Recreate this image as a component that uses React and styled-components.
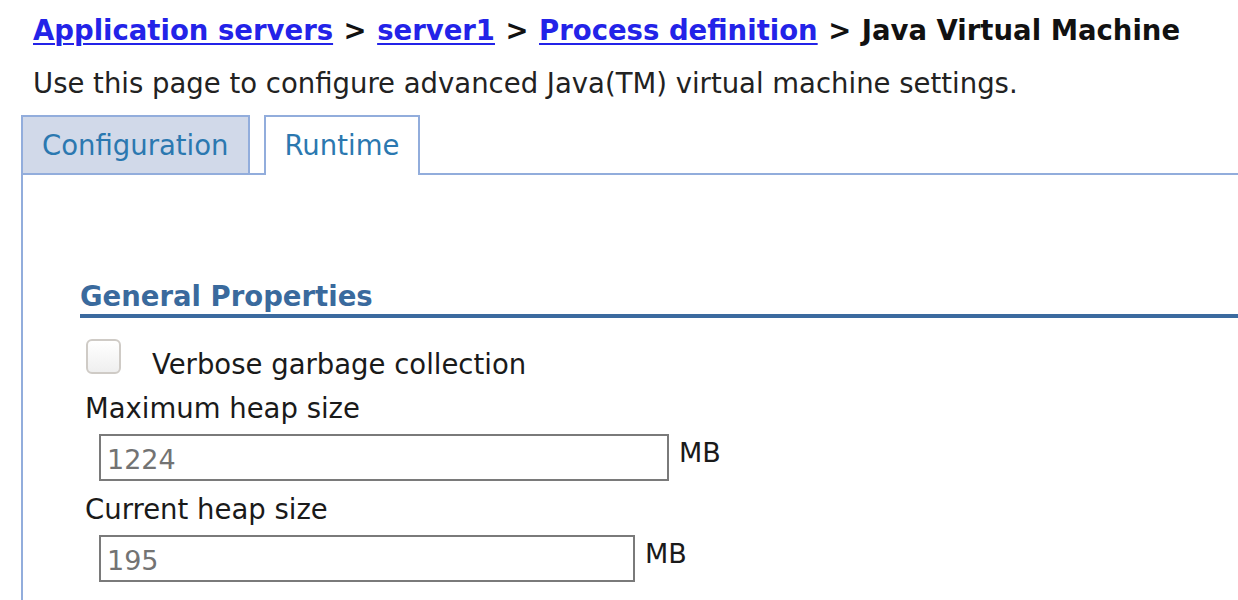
import React from "react";
import styled, { createGlobalStyle } from "styled-components";

const GlobalStyle = createGlobalStyle`
  html, body {
    margin: 0;
    padding: 0;
    background: #ffffff;
    overflow: hidden;
  }
  body {
    font-family: "DejaVu Sans", "Noto Sans", sans-serif;
    color: #1a1a1a;
  }
`;

const Page = styled.div`
  padding: 12px 0 0 21px;
  width: 1217px;
  box-sizing: content-box;
`;

const Breadcrumb = styled.div`
  padding-left: 12px;
  font-size: 27.5px;
  font-weight: bold;
  line-height: 36px;
  color: #111;
  white-space: nowrap;
`;

const Crumb = styled.a`
  color: #2323e8;
  text-decoration: underline;
  text-decoration-thickness: 2px;
  text-underline-offset: 3px;
  cursor: pointer;
`;

const Sep = styled.span`
  margin: 0 10.5px;
`;

const Description = styled.p`
  margin: 17px 0 0;
  padding-left: 12px;
  font-size: 27.5px;
  line-height: 36px;
  color: #222;
`;

const TabBar = styled.div`
  display: flex;
  align-items: flex-end;
  margin-top: 14px;
  border-bottom: 2px solid #92addc;
`;

const Tab = styled.div`
  box-sizing: border-box;
  padding: 0 19px;
  display: flex;
  align-items: center;
  font-size: 27.5px;
  color: #2b78b0;
  border: 2px solid #92addc;
  border-bottom: none;
  background: ${(p) => (p.$active ? "#ffffff" : "#d1d9e9")};
  margin-right: 14px;
  margin-bottom: ${(p) => (p.$active ? "-2px" : "0")};
  height: ${(p) => (p.$active ? "60px" : "58px")};
  padding-bottom: ${(p) => (p.$active ? "2px" : "0")};
  cursor: pointer;
`;

const Panel = styled.div`
  border-left: 2px solid #92addc;
  padding: 104px 0 40px 57px;
`;

const SectionTitle = styled.h2`
  margin: 0;
  font-size: 27.5px;
  font-weight: bold;
  line-height: 35px;
  color: #3a6a9d;
  border-bottom: 4px solid #3b6a9f;
`;

const CheckRow = styled.label`
  display: flex;
  align-items: baseline;
  margin-top: 21px;
  margin-left: 6px;
  font-size: 27.5px;
  line-height: 36px;
  color: #1a1a1a;
`;

const CheckBox = styled.span`
  display: inline-block;
  width: 35px;
  height: 35px;
  box-sizing: border-box;
  border: 2px solid #cfcbc6;
  border-radius: 6px;
  background: linear-gradient(#ffffff, #efefef);
  margin-right: 31px;
  flex-shrink: 0;
`;

const FieldLabel = styled.div`
  margin: ${(p) => p.$top}px 0 0 5px;
  font-size: 27.5px;
  line-height: 36px;
  color: #1a1a1a;
`;

const InputRow = styled.div`
  display: flex;
  align-items: flex-start;
  margin: 8px 0 0 19px;
`;

const TextBox = styled.div`
  width: ${(p) => p.$w}px;
  height: 47px;
  box-sizing: border-box;
  border: 2px solid #7a7a7a;
  padding: 3px 0 0 6px;
  font-size: 27px;
  line-height: 42px;
  color: #737373;
  overflow: hidden;
`;

const Unit = styled.span`
  margin: 1px 0 0 10px;
  font-size: 27px;
  line-height: 36px;
  color: #1a1a1a;
`;

export default function App() {
  return (
    <>
      <GlobalStyle />
      <Page>
        <Breadcrumb>
          <Crumb>Application servers</Crumb>
          <Sep>&gt;</Sep>
          <Crumb>server1</Crumb>
          <Sep>&gt;</Sep>
          <Crumb>Process definition</Crumb>
          <Sep>&gt;</Sep>
          Java Virtual Machine
        </Breadcrumb>
        <Description>
          Use this page to configure advanced Java(TM) virtual machine settings.
        </Description>
        <TabBar>
          <Tab>Configuration</Tab>
          <Tab $active>Runtime</Tab>
        </TabBar>
        <Panel>
          <SectionTitle>General Properties</SectionTitle>
          <CheckRow>
            <CheckBox />
            Verbose garbage collection
          </CheckRow>
          <FieldLabel $top={8}>Maximum heap size</FieldLabel>
          <InputRow>
            <TextBox $w={570}>1224</TextBox>
            <Unit>MB</Unit>
          </InputRow>
          <FieldLabel $top={10}>Current heap size</FieldLabel>
          <InputRow>
            <TextBox $w={536}>195</TextBox>
            <Unit>MB</Unit>
          </InputRow>
        </Panel>
      </Page>
    </>
  );
}
